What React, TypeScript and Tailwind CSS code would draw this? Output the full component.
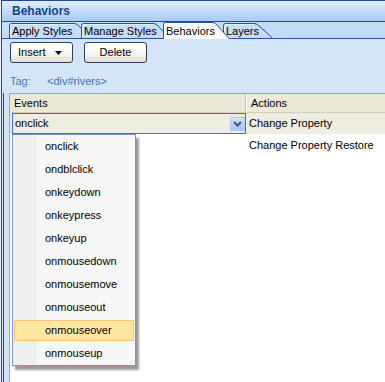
import React from "react";

const items = [
  "onclick",
  "ondblclick",
  "onkeydown",
  "onkeypress",
  "onkeyup",
  "onmousedown",
  "onmousemove",
  "onmouseout",
  "onmouseover",
  "onmouseup",
];

type TabProps = {
  label: string;
  w: number;
  slant: number;
  active?: boolean;
  className: string;
};

function Tab({ label, w, slant, active, className }: TabProps) {
  const h = active ? 17 : 16;
  const top = active ? 0.5 : 1.5;
  const d = `M0.5,${h} L0.5,${top + 2} Q0.5,${top} 2.5,${top} L${w - slant - 3},${top} Q${w - slant - 0.5},${top} ${w - slant + 1},${top + 1.5} L${w - 0.5},${h}`;
  return (
    <div className={`relative shrink-0 ${className}`}>
      <svg className="absolute inset-0" width={w} height={h} viewBox={`0 0 ${w} ${h}`}>
        <path d={d} fill={active ? "#ffffff" : "#c6dcfa"} stroke="#2452a3" strokeWidth="1" />
        {!active && (
          <path
            d={`M1.5,${h} L1.5,${top + 2.5} Q1.5,${top + 1} 3,${top + 1} L${w - slant - 3},${top + 1}`}
            fill="none"
            stroke="#e6f0fd"
            strokeWidth="1"
          />
        )}
      </svg>
      <div className="relative pl-[3px] pt-[2px] leading-[14px] whitespace-nowrap text-black">{label}</div>
    </div>
  );
}

export default function App() {
  return (
    <div className="w-[385px] h-[382px] overflow-hidden bg-[#e6effb] font-['Liberation_Sans',Arial,sans-serif] text-[11px] text-black">
      <div className="ml-px h-full border-l border-[#1d4f9f] bg-[#d4e5f7] flex flex-col">
        {/* title */}
        <div className="h-[22px] shrink-0 border-t border-b border-[#1c4a98] bg-gradient-to-b from-[#e0ecfc] to-[#a7caf5] pl-[10px] flex items-center font-bold text-[12px] text-[#15428b]">
          Behaviors
        </div>
        {/* tabs */}
        <div className="h-[17px] shrink-0 bg-[#c4dbf9] border-b border-[#2553a6] flex items-start pl-[7px]">
          <Tab label="Apply Styles" w={82} slant={14} className="w-[82px] h-[16px] z-[1]" />
          <Tab label="Manage Styles" w={89} slant={14} className="w-[89px] h-[16px] -ml-[10px] z-[2]" />
          <Tab label="Behaviors" w={67} slant={15} active className="w-[67px] h-[17px] -ml-[7px] z-[4]" />
          <Tab label="Layers" w={50} slant={16} className="w-[50px] h-[16px] -ml-[7px] z-[3]" />
        </div>
        {/* toolbar */}
        <div className="shrink-0 pl-[8px] pt-[3px] flex gap-[11px]">
          <button className="w-[63px] h-[21px] rounded-[3px] border border-[#2b3f66] bg-gradient-to-b from-white via-[#f8f7f2] to-[#e2dfd2] flex items-center pl-[7px] text-[11px] text-black">
            <span>Insert</span>
            <svg className="ml-[9px]" width="7" height="4" viewBox="0 0 7 4">
              <polygon points="0,0 7,0 3.5,4" fill="#000" />
            </svg>
          </button>
          <button className="w-[63px] h-[21px] rounded-[3px] border border-[#2b3f66] bg-gradient-to-b from-white via-[#f8f7f2] to-[#e2dfd2] flex items-center justify-center text-[11px] text-black">
            Delete
          </button>
        </div>
        <div className="shrink-0 mt-[11px] h-[14px] pl-[8px] flex leading-[14px]">
          <span className="w-[37px] text-[#4a78b8]">Tag:</span>
          <span className="text-[#3a6fc8]">&lt;div#rivers&gt;</span>
        </div>
        {/* grid area */}
        <div className="flex-1 mt-[5px] ml-px border-l border-[#1d4f9f] pl-[5px] flex">
          <div className="flex-1 relative border-l border-t border-[#8ea7cd] bg-white">
            <div className="h-[19px] flex bg-[#ece9d8] border-b border-[#d3cfbc]">
              <div className="w-[236px] border-r border-[#c5c2b2] pl-[4px] flex items-center">Events</div>
              <div className="flex-1 border-l border-white pl-[4px] flex items-center">Actions</div>
            </div>
            <div className="h-[21px] flex bg-[#efece1]">
              <div className="w-[236px] pl-[2px]">
                <div className="h-[21px] border border-[#3b6fd0] bg-[#efece1] flex items-center justify-between pl-[2px]">
                  <span>onclick</span>
                  <div className="w-[15px] h-[14px] border border-[#b9caf0] bg-gradient-to-b from-[#d3e0fd] to-[#aec3f4] flex items-center justify-center">
                    <svg width="9" height="6" viewBox="0 0 9 6">
                      <path d="M1,1 L4.5,4.5 L8,1" fill="none" stroke="#3f5483" strokeWidth="2" />
                    </svg>
                  </div>
                </div>
              </div>
              <div className="flex-1 pl-[3px] flex items-center">Change Property</div>
            </div>
            <div className="h-[22px] flex">
              <div className="w-[236px]" />
              <div className="flex-1 pl-[3px] flex items-center">Change Property Restore</div>
            </div>
            {/* dropdown list */}
            <div className="absolute left-[2px] top-[40px] w-[124px] border border-[#7497d1] bg-[linear-gradient(to_right,#efefef_24px,#f7f7f7_24px)] shadow-[3px_4px_2px_rgba(0,0,0,0.4)]">
              {items.map((it) =>
                it === "onmouseover" ? (
                  <div key={it} className="h-[23px] p-px">
                    <div className="h-full border border-[#ffc36b] bg-[#ffe7a2] pl-[30px] flex items-center">{it}</div>
                  </div>
                ) : (
                  <div key={it} className="h-[23px] pl-[32px] flex items-center">
                    {it}
                  </div>
                )
              )}
            </div>
          </div>
        </div>
      </div>
    </div>
  );
}
